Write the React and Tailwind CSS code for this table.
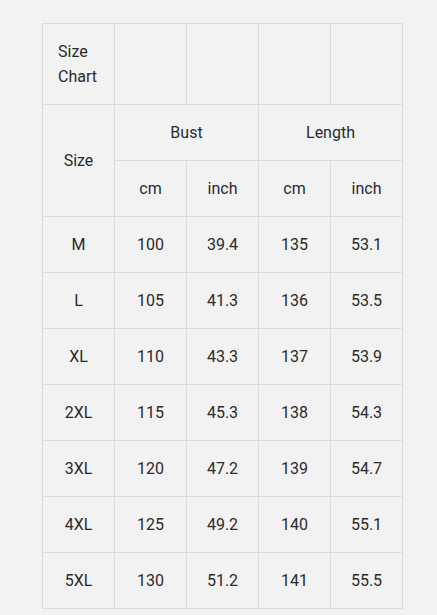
import React from 'react';

const rows = [
  ['M', '100', '39.4', '135', '53.1'],
  ['L', '105', '41.3', '136', '53.5'],
  ['XL', '110', '43.3', '137', '53.9'],
  ['2XL', '115', '45.3', '138', '54.3'],
  ['3XL', '120', '47.2', '139', '54.7'],
  ['4XL', '125', '49.2', '140', '55.1'],
  ['5XL', '130', '51.2', '141', '55.5'],
];

const cell = 'border border-[#dcdcdc] h-[56px] px-[8px] text-center align-middle';

export default function App() {
  return (
    <div className="min-h-screen bg-[#f2f2f2] pt-[23px] pl-[42px] text-[16px] leading-[25px] text-[#2a2a2a] font-['Roboto',sans-serif]">
      <table className="border-collapse table-fixed w-[361px]">
        <colgroup>
          <col className="w-[72px]" />
          <col className="w-[72px]" />
          <col className="w-[72px]" />
          <col className="w-[72px]" />
          <col className="w-[72px]" />
        </colgroup>
        <tbody>
          <tr>
            <td className="border border-[#dcdcdc] h-[81px] pl-[15px] pr-[8px] text-left align-middle">
              Size Chart
            </td>
            <td className="border border-[#dcdcdc]"></td>
            <td className="border border-[#dcdcdc]"></td>
            <td className="border border-[#dcdcdc]"></td>
            <td className="border border-[#dcdcdc]"></td>
          </tr>
          <tr>
            <td rowSpan={2} className={cell}>Size</td>
            <td colSpan={2} className={cell}>Bust</td>
            <td colSpan={2} className={cell}>Length</td>
          </tr>
          <tr>
            <td className={cell}>cm</td>
            <td className={cell}>inch</td>
            <td className={cell}>cm</td>
            <td className={cell}>inch</td>
          </tr>
          {rows.map((r) => (
            <tr key={r[0]}>
              {r.map((v, i) => (
                <td key={i} className={cell}>{v}</td>
              ))}
            </tr>
          ))}
        </tbody>
      </table>
      <div className="pt-[2px] font-bold text-[15px]">Specifications:</div>
    </div>
  );
}
